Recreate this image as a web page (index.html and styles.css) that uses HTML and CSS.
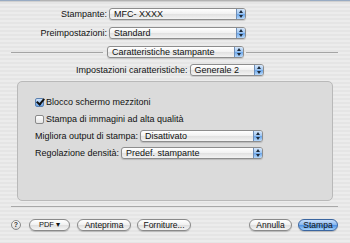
FILE: index.html
```html
<!DOCTYPE html>
<html>
<head lang="it">
    <meta charset="UTF-8">
    <title>Stampa</title>
    <link rel="stylesheet" href="styles.css">
</head>
<body>
<div class="dialog">
    <div class="topbar"></div>

    <div class="row first">
        <span class="label">Stampante:</span>
        <div class="popup w-main"><span>MFC- XXXX</span><i></i></div>
    </div>
    <div class="row">
        <span class="label">Preimpostazioni:</span>
        <div class="popup w-main"><span>Standard</span><i></i></div>
    </div>
    <div class="row panes">
        <div class="rule"></div>
        <div class="popup w-main"><span>Caratteristiche stampante</span><i></i></div>
        <div class="rule"></div>
    </div>
    <div class="row features">
        <span>Impostazioni caratteristiche:</span>
        <div class="popup w-small"><span>Generale 2</span><i></i></div>
    </div>

    <div class="group">
        <label class="check"><span class="box on"></span>Blocco schermo mezzitoni</label>
        <label class="check"><span class="box"></span>Stampa di immagini ad alta qualità</label>
        <div class="opt">
            <span>Migliora output di stampa:</span>
            <div class="popup grow"><span>Disattivato</span><i></i></div>
        </div>
        <div class="opt">
            <span>Regolazione densità:</span>
            <div class="popup grow"><span>Predef. stampante</span><i></i></div>
        </div>
    </div>

    <div class="sep"></div>

    <div class="buttons">
        <span class="help">?</span>
        <span class="btn pdf">PDF &#9662;</span>
        <span class="btn preview">Anteprima</span>
        <span class="btn supplies">Forniture...</span>
        <span class="spacer"></span>
        <span class="btn cancel">Annulla</span>
        <span class="btn print">Stampa</span>
    </div>
</div>
</body>
</html>
```

FILE: styles.css
```css
*{padding: 0;margin: 0;box-sizing: border-box;}
body{font: 9px "Liberation Sans", Arial, sans-serif;color: #111;}
.dialog{width: 350px;height: 243px;overflow: hidden;background: repeating-linear-gradient(#ececec 0, #ececec 2px, #e5e5e5 2px, #e5e5e5 4px);}
.topbar{height: 2px;background: linear-gradient(to right, #98abc3 0, #98abc3 40px, #b3b3b3 40px, #b3b3b3 310px, #98abc3 310px);border-bottom: 1px solid #d0d0d0;}

.row{display: flex;align-items: center;height: 12px;margin-top: 7px;}
.row.first{margin-top: 6px;}
.label{width: 107px;text-align: right;margin-right: 2px;}
.panes{padding: 0 12px 0 11px;}
.panes .rule{flex: 1;height: 1px;background: #a4a4a4;}
.panes .rule:first-child{margin-right: 4px;}
.panes .rule:last-child{margin-left: 2px;}
.features{margin-top: 6px;padding-left: 76px;}
.features span{margin-right: 2px;}

.popup{position: relative;display: flex;align-items: center;height: 12px;border: 1px solid #8d8d8d;border-radius: 3px;background: linear-gradient(#ffffff, #f1f1f1 50%, #e1e1e1 51%, #f3f3f3);box-shadow: 0 1px 1px rgba(0,0,0,0.15);overflow: hidden;}
.popup span{flex: 1;padding-left: 4px;line-height: 10px;white-space: nowrap;}
.popup i{width: 9px;height: 100%;border-left: 1px solid #6f8fb8;background: linear-gradient(#d6e7fb, #9cc4f0 50%, #6aa5e9 51%, #b7d9fb);position: relative;}
.popup i:before, .popup i:after{content: "";position: absolute;left: 2px;border-left: 2px solid transparent;border-right: 2px solid transparent;}
.popup i:before{top: 1px;border-bottom: 3px solid #1d2a3a;}
.popup i:after{bottom: 1px;border-top: 3px solid #1d2a3a;}
.w-main{width: 137px;}
.w-small{width: 74px;}

.group{margin: 5px 0 0 17px;width: 316px;height: 120px;border: 1px solid #b9b9b9;border-radius: 5px;background: #dbdbdb;padding: 14px 0 0 17px;display: flex;flex-direction: column;gap: 5px;}
.check{display: flex;align-items: center;height: 12px;}
.box{width: 9px;height: 9px;margin-right: 2px;border: 1px solid #8a8a8a;border-radius: 2px;background: linear-gradient(#ffffff, #e4e4e4);position: relative;}
.box.on{background: linear-gradient(#cfe3fb, #6aa3e6);border-color: #5a7fae;}
.box.on:after{content: "";position: absolute;left: 2px;top: -2px;width: 3px;height: 6px;border-right: 2px solid #111;border-bottom: 2px solid #111;transform: rotate(40deg);}
.opt{display: flex;align-items: center;height: 12px;width: 228px;}
.opt > span{margin-right: 2px;white-space: nowrap;}
.popup.grow{flex: 1;}

.sep{height: 1px;margin: 5px 12px 0 11px;background: #a8a8a8;}

.buttons{display: flex;align-items: center;height: 12px;margin-top: 12px;padding: 0 12px 0 11px;}
.help{width: 10px;height: 10px;border-radius: 50%;border: 1px solid #888;background: linear-gradient(#ffffff, #d9d9d9);font-size: 7px;font-weight: bold;line-height: 8px;text-align: center;color: #333;margin-right: 8px;}
.btn{height: 12px;border: 1px solid #8a8a8a;border-radius: 6px;background: linear-gradient(#ffffff, #f0f0f0 50%, #dedede 51%, #f4f4f4);box-shadow: 0 1px 1px rgba(0,0,0,0.2);text-align: center;line-height: 10px;font-size: 8.5px;white-space: nowrap;}
.pdf{width: 41px;margin-right: 7px;font-size: 7.5px;}
.preview{width: 54px;margin-right: 6px;}
.supplies{width: 54px;}
.spacer{flex: 1;}
.cancel{width: 43px;margin-right: 6px;}
.print{width: 40px;border-color: #3b66a0;background: linear-gradient(#c7defb, #86b6ee 50%, #4a8fe3 51%, #a6d3fb);}
```
